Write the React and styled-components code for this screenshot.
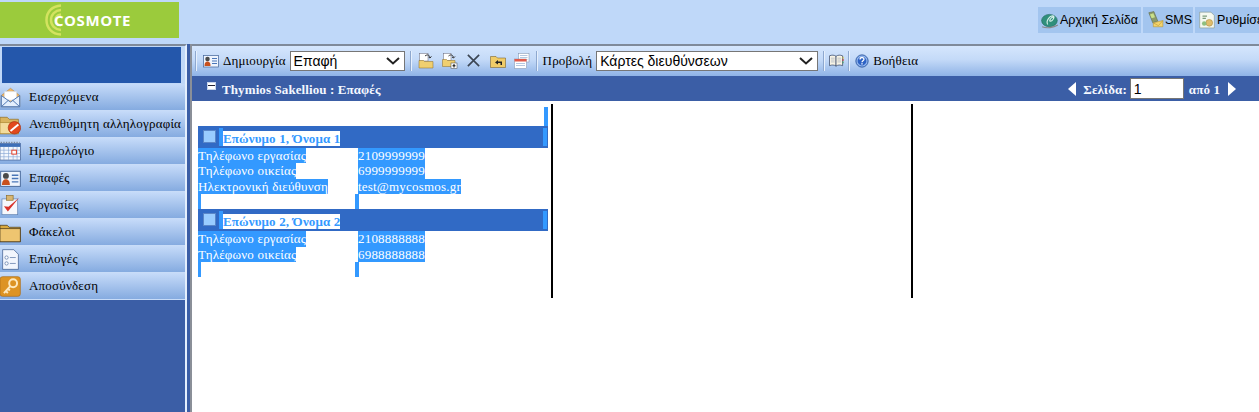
import React from 'react'
import styled, { createGlobalStyle } from 'styled-components'

const GlobalStyle = createGlobalStyle`
  html, body {
    margin: 0;
    height: 100%;
    overflow: hidden;
    background: #fff;
  }
  #root {
    height: 100%;
  }
`

/* icons */
const Sized = ({ s = 16, children }) => (
  <svg width={s} height={s} viewBox="0 0 32 32" style={{ flexShrink: 0, display: 'block' }}>
    {children}
  </svg>
)

const MailIcon = (p) => (
  <Sized {...p}>
    <path d="M2 13 16 2l14 11v17H2z" fill="#f2b866" stroke="#b58a50" />
    <path d="M7 7h18v13H7z" fill="#fff" stroke="#dbe4f0" />
    <path d="M2 13l14 10 14-10v17H2z" fill="#e4effd" stroke="#4f78b4" strokeWidth="1.500" />
    <path d="M2 30l11-10M30 30 19 20" stroke="#4f78b4" strokeWidth="1.500" fill="none" />
  </Sized>
)
const JunkIcon = (p) => (
  <Sized {...p}>
    <path d="M0 5h11l3 3h14v22H0z" fill="#d9b45e" stroke="#8c6a22" />
    <path d="M0 13h28v17H0z" fill="#f3dc9c" stroke="#a8842c" />
    <circle cx="22" cy="21" r="9.500" fill="#e2491c" stroke="#a83010" />
    <path d="M16 26 28 16" stroke="#fff" strokeWidth="3" />
  </Sized>
)
const CalendarIcon = (p) => (
  <Sized {...p}>
    <rect x="0" y="4" width="31" height="25" fill="#f4f8fe" stroke="#3a5a90" />
    <rect x="0" y="4" width="31" height="5" fill="#3e6fb8" />
    <path d="M0 14h31M0 19h31M0 24h31M6 9v20M13 9v20M20 9v20M26 9v20" stroke="#8aa8d4" />
    <rect x="18" y="14" width="7" height="6" fill="#fff" stroke="#e0402a" strokeWidth="1.500" />
    <path d="M1 2h29" stroke="#444" strokeDasharray="2 2" />
  </Sized>
)
const ContactIcon = (p) => (
  <Sized {...p}>
    <rect x="1" y="5" width="30" height="23" fill="#eef4fd" stroke="#4a6a9c" strokeWidth="1.500" />
    <circle cx="9" cy="12" r="4.500" fill="#4a4a4a" />
    <path d="M3 26c0-7 3-9 6-9s6 2 6 9z" fill="#c8501e" />
    <path d="M18 11h10M18 16h10M18 21h10" stroke="#4a76b8" strokeWidth="2" />
  </Sized>
)
const TaskIcon = (p) => (
  <Sized {...p}>
    <rect x="3" y="6" width="24" height="24" fill="#f6f8fc" stroke="#5b7cad" />
    <rect x="10" y="1" width="10" height="7" fill="#d8b673" stroke="#8c6a22" />
    <path d="M6 17l6 8L29 4 13 18z" fill="#d8322a" />
  </Sized>
)
const FolderIcon = (p) => (
  <Sized {...p}>
    <path d="M0 5h11l3 3h17v22H0z" fill="#d9a93f" stroke="#3a2a10" />
    <path d="M0 10h31v20H0z" fill="#eec570" stroke="#3a2a10" />
  </Sized>
)
const OptionsIcon = (p) => (
  <Sized {...p}>
    <path d="M4 1h17l7 7v23H4z" fill="#f2f6fd" stroke="#2f4f84" />
    <circle cx="10" cy="13" r="2.500" fill="#fff" stroke="#4a6a9c" />
    <circle cx="10" cy="22" r="2.500" fill="#fff" stroke="#4a6a9c" />
    <path d="M15 13h9M15 22h9" stroke="#4a6a9c" />
  </Sized>
)
const KeyIcon = (p) => (
  <Sized {...p}>
    <rect x="0" y="1" width="31" height="30" rx="4" fill="#dd9323" stroke="#a96a14" />
    <circle cx="20" cy="11" r="6" fill="none" stroke="#fde9c0" strokeWidth="3" />
    <path d="M16 15 6 26M9 23l3 3M12 19l3 3" stroke="#fde9c0" strokeWidth="3" fill="none" />
  </Sized>
)
const MoveIcon = (p) => (
  <Sized {...p}>
    <rect x="3" y="1" width="17" height="15" fill="#fff" stroke="#667" />
    <path d="M14 6c5-4 9-2 10 3M24 10l-3-2M24 10l3-3" stroke="#333" strokeWidth="2" fill="none" />
    <path d="M2 15h9l2 2h17v13H2z" fill="#f0cf70" stroke="#8c6a22" />
  </Sized>
)
const CopyIcon = (p) => (
  <Sized {...p}>
    <rect x="3" y="1" width="15" height="14" fill="#fff" stroke="#667" />
    <path d="M13 6c5-4 9-2 10 3M23 10l-3-2M23 10l3-3" stroke="#333" strokeWidth="2" fill="none" />
    <path d="M1 13h8l2 2h15v12H1z" fill="#f0cf70" stroke="#8c6a22" />
    <rect x="18" y="20" width="12" height="11" fill="#fff" stroke="#444" />
    <path d="M24 22v7M21 25.500h6" stroke="#111" strokeWidth="2" />
  </Sized>
)
const DeleteIcon = (p) => (
  <Sized {...p}>
    <path d="M4 4l24 24M28 4 4 28" stroke="#3c4654" strokeWidth="3.500" />
  </Sized>
)
const FolderUpIcon = (p) => (
  <Sized {...p}>
    <path d="M1 7h11l3 3h16v19H1z" fill="#f0cc68" stroke="#6c5014" />
    <path d="M10 19l6-5v3h8v7h-3v-4h-5v3z" fill="#222" />
  </Sized>
)
const ListIcon = (p) => (
  <Sized {...p}>
    <rect x="9" y="1" width="21" height="17" fill="#fff" stroke="#7a8ca8" />
    <path d="M12 5h15M12 9h15M12 13h15" stroke="#6d8fc0" />
    <rect x="1" y="12" width="24" height="19" fill="#fff" stroke="#7a8ca8" />
    <rect x="1" y="12" width="24" height="5" fill="#e25a4a" />
    <path d="M4 21h18M4 25h18" stroke="#6d8fc0" />
  </Sized>
)
const BookIcon = (p) => (
  <Sized {...p}>
    <path d="M1 6c5-2 10-2 14 1v21c-4-3-9-3-14-1z" fill="#f8f4e6" stroke="#2c3e62" strokeWidth="1.500" />
    <path d="M29 6c-5-2-10-2-14 1v21c4-3 9-3 14-1z" fill="#f8f4e6" stroke="#2c3e62" strokeWidth="1.500" />
    <path d="M4 11h8M4 15h8M4 19h8M18 11h8M18 15h8M18 19h8" stroke="#7a8ca8" />
    <path d="M29 8h2v4h-2z" fill="#e2c22a" />
    <path d="M29 13h2v4h-2z" fill="#d8322a" />
    <path d="M29 18h2v4h-2z" fill="#3aa04a" />
  </Sized>
)
const HelpIcon = (p) => (
  <Sized {...p}>
    <circle cx="16" cy="16" r="14" fill="#8fb4ee" stroke="#23509c" strokeWidth="2" />
    <circle cx="16" cy="16" r="10" fill="#2d62c4" />
    <path d="M11.500 12.500c0-6 9-6 9-.5 0 3.500-4.500 3.500-4.500 7" stroke="#fff" strokeWidth="3" fill="none" />
    <rect x="14.500" y="21" width="3" height="3" fill="#fff" />
  </Sized>
)
const HomeIcon = (p) => (
  <Sized {...p}>
    <ellipse cx="15" cy="17" rx="14" ry="11" fill="#2f8f7c" stroke="#1c6458" />
    <path d="M12 24c-4-6 4-17 10-15 3 2-2 10-6 9-2-1 3-8 6-7" stroke="#d5efe8" strokeWidth="2" fill="none" />
    <path d="M2 28c8 3 20 2 28-3" stroke="#888" strokeWidth="2" fill="none" />
  </Sized>
)
const SmsIcon = (p) => (
  <Sized {...p}>
    <path d="M5 3l9-2 7 17-9 3z" fill="#8a9a6a" stroke="#5e6a48" />
    <path d="M7 6l6-2 3 7-6 2z" fill="#c9e08a" />
    <path d="M13 21l17-4v11H13z" fill="#f3d36c" stroke="#b89430" />
    <path d="M13 21l9 5 8-9" stroke="#b89430" fill="none" />
  </Sized>
)
const SettingsIcon = (p) => (
  <Sized {...p}>
    <path d="M3 2h20l6 6v22H3z" fill="#f4f8f0" stroke="#7f8f80" />
    <path d="M8 9h8M8 13h6" stroke="#7a9a7a" strokeWidth="2" />
    <circle cx="20" cy="21" r="6" fill="#e0bd6c" stroke="#a88a3c" />
    <circle cx="11" cy="22" r="4" fill="#8fbf7f" />
  </Sized>
)
const Logo = () => (
  <svg width="18" height="32" viewBox="0 0 18 32" style={{ display: 'block', flexShrink: 0 }}>
    <g fill="none" stroke="#d3e35f" strokeWidth="2.500">
      <path d="M16 1.500C7 2 1.500 8 1.500 16S7 30 16 30.500" />
      <path d="M16 6C10 6.500 6 10.500 6 16s4 9.500 10 10" />
      <path d="M16 10.500C12.500 11 10.500 13 10.500 16s2 5 5.500 5.500" />
    </g>
  </svg>
)

const Page = styled.div`
  display: flex;
  flex-direction: column;
  height: 100%;
  width: 1259px;
  overflow: hidden;
  background: #fff;
`
const Header = styled.header`
  display: flex;
  justify-content: space-between;
  align-items: flex-start;
  height: 44px;
  flex-shrink: 0;
  background: #bfd8f9;
`
const LogoBox = styled.div`
  display: flex;
  align-items: center;
  justify-content: center;
  width: 179px;
  height: 36px;
  margin-top: 2px;
  padding-right: 3px;
  box-sizing: border-box;
  background: #9bcb3c;
`
const LogoText = styled.span`
  margin-left: -9px;
  font: bold 15px "Open Sans", sans-serif;
  letter-spacing: 0.6px;
  color: #fff;
`
const HeaderLinks = styled.nav`
  display: flex;
  gap: 2px;
  width: 221px;
  margin-top: 7px;
  flex-shrink: 0;
  overflow: hidden;
`
const HeaderLink = styled.a`
  display: flex;
  align-items: center;
  gap: 1px;
  height: 26px;
  padding: 0 ${(p) => (p.$tight ? '1px' : '3px')} 0 3px;
  flex-shrink: 0;
  background: #a3c5ef;
  font: 12.500px "Liberation Sans", sans-serif;
  color: #000;
`
const Body = styled.div`
  display: flex;
  flex: 1;
  min-height: 0;
`
const Sidebar = styled.aside`
  display: flex;
  flex-direction: column;
  width: 187px;
  flex-shrink: 0;
  box-sizing: border-box;
  border-top: 2px solid #7f8a9a;
  border-right: 2px solid #e4effd;
  background: #3b5ea6;
`
const SideTopWrap = styled.div`
  padding: 1px 4px 1px 2px;
  background: #c0d8f8;
`
const SideTop = styled.div`
  height: 36px;
  background: #2457ab;
`
const NavItem = styled.a`
  display: flex;
  align-items: center;
  height: 26px;
  border-bottom: 1px solid #c8dcf8;
  background: linear-gradient(#c6dbf9, #85abe0);
  font: 13px "Liberation Serif", serif;
  letter-spacing: 0.2px;
  color: #000;
  white-space: nowrap;
`
const NavIconBox = styled.span`
  display: flex;
  width: 29px;
  flex-shrink: 0;
`
const Splitter = styled.div`
  width: 5px;
  flex-shrink: 0;
  box-sizing: border-box;
  background: #3b5ea6;
  border-right: 2px solid #8a8f98;
`
const Main = styled.main`
  display: flex;
  flex-direction: column;
  flex: 1;
  min-width: 0;
  border-top: 2px solid #7f8a9a;
`
const Toolbar = styled.div`
  display: flex;
  align-items: center;
  gap: 4px;
  height: 30px;
  flex-shrink: 0;
  padding: 0 0 1px 2px;
  box-sizing: border-box;
  background: linear-gradient(#d5e6fd, #c4daf8 45%, #8fb3e6);
  font: 13px "Liberation Serif", serif;
  letter-spacing: 0.15px;
  color: #000;
`
const Sep = styled.span`
  width: 1px;
  height: 20px;
  margin: 0 1px;
  background: #8ea8cf;
  border-right: 1px solid #e6f0fd;
`
const ToolGroup = styled.span`
  display: flex;
  align-items: center;
  gap: 4px;
  margin: 0 -1px;
`
const ToolButton = styled.span`
  display: flex;
  align-items: center;
  justify-content: center;
  width: ${(p) => p.$w || 20}px;
`
const FakeSelect = styled.div`
  display: flex;
  align-items: center;
  justify-content: space-between;
  width: ${(p) => p.$w}px;
  height: 20px;
  padding: 0 4px 0 3px;
  box-sizing: border-box;
  background: #fff;
  border: 1px solid #767676;
  font: 14px "Liberation Sans", sans-serif;
  letter-spacing: 0;
`
const TitleBar = styled.div`
  display: flex;
  align-items: center;
  height: 25px;
  flex-shrink: 0;
  box-sizing: border-box;
  padding: 2px 23px 0 15px;
  background: #3b5ea6;
  font: bold 13px "Liberation Serif", serif;
  letter-spacing: 0.1px;
  color: #f4f8ff;
`
const Collapse = styled.span`
  width: 9px;
  height: 8px;
  margin: -8px 6px 0 0;
  box-sizing: border-box;
  background: #fff;
  border: 1px solid #c5d3ea;
  display: flex;
  align-items: center;
  justify-content: center;
  &::after {
    content: '';
    width: 7px;
    height: 1px;
    background: #223;
  }
`
const TitleSpacer = styled.span`
  flex: 1;
`
const Arrow = styled.span`
  width: 0;
  height: 0;
  border-top: 7px solid transparent;
  border-bottom: 7px solid transparent;
  ${(p) => (p.$left ? 'border-right: 8px solid #fff;' : 'border-left: 8px solid #fff;')}
  margin: ${(p) => (p.$left ? '-2px 7px 0 0' : '-2px 0 0 8px')};
`
const PageInput = styled.input`
  width: 54px;
  height: 21px;
  margin: -2px 5px 0 3px;
  padding: 0 2px 0 3px;
  box-sizing: border-box;
  border: 1px solid #767676;
  font: 14px "Liberation Sans", sans-serif;
`
const Columns = styled.div`
  display: grid;
  grid-template-columns: repeat(2, 360px);
  height: 194px;
  margin-top: 3px;
  padding-left: 6px;
`
const Column = styled.div`
  width: 355px;
  padding-top: 3px;
  box-sizing: border-box;
  border-right: 2px solid #000;
`
const TopSliver = styled.div`
  display: flex;
  justify-content: flex-end;
  width: 350px;
  height: 19px;
  &::after {
    content: '';
    width: 4px;
    background: #3399ff;
  }
`
const Card = styled.section`
  width: 350px;
`
const CardHead = styled.div`
  display: flex;
  align-items: stretch;
  height: 22px;
  padding: 2px 1px 2px 5px;
  box-sizing: border-box;
  background: #316ac5;
`
const Check = styled.span`
  width: 13px;
  height: 13px;
  margin: 2px 3px 0 0;
  box-sizing: border-box;
  background: #99ccff;
  border: 1px solid #5a86c8;
`
const NameSliver = styled.span`
  width: 4px;
  background: #3399ff;
`
const Name = styled.span`
  align-self: flex-end;
  height: 15px;
  background: #fff;
  font: bold 13px/15px "Liberation Serif", serif;
  letter-spacing: 0.15px;
  color: #3399ff;
  white-space: nowrap;
`
const HeadSpacer = styled.span`
  flex: 1;
`
const Rows = styled.dl`
  display: grid;
  grid-template-columns: 157px 1fr;
  margin: 0;
  font: 13px/15px "Liberation Serif", serif;
  letter-spacing: 0.2px;
`
const Cell = styled.dd`
  margin: 0;
  height: 15.400px;
  padding-left: ${(p) => (p.$value ? '3px' : 0)};
`
const Selected = styled.span`
  display: inline-block;
  height: 100%;
  background: #3399ff;
  color: #fff;
  white-space: nowrap;
`
const Filler = styled.div`
  display: grid;
  grid-template-columns: 157px 1fr;
  height: 15px;
`
const FillerBar = styled.span`
  display: block;
  width: ${(p) => p.$w}px;
  height: 100%;
  background: #3399ff;
`

const navItems = [
  ['Εισερχόμενα', MailIcon],
  ['Ανεπιθύμητη αλληλογραφία', JunkIcon],
  ['Ημερολόγιο', CalendarIcon],
  ['Επαφές', ContactIcon],
  ['Εργασίες', TaskIcon],
  ['Φάκελοι', FolderIcon],
  ['Επιλογές', OptionsIcon],
  ['Αποσύνδεση', KeyIcon],
]

const contacts = [
  {
    name: 'Επώνυμο 1, Όνομα 1',
    rows: [
      ['Τηλέφωνο εργασίας', '2109999999'],
      ['Τηλέφωνο οικείας', '6999999999'],
      ['Ηλεκτρονική διεύθυνση', 'test@mycosmos.gr'],
    ],
  },
  {
    name: 'Επώνυμο 2, Όνομα 2',
    rows: [
      ['Τηλέφωνο εργασίας', '2108888888'],
      ['Τηλέφωνο οικείας', '6988888888'],
    ],
  },
]

const Chevron = () => (
  <svg width="14" height="8" viewBox="0 0 14 8" style={{ display: 'block' }}>
    <path d="M1 1l6 5.500L13 1" fill="none" stroke="#222" strokeWidth="2" />
  </svg>
)

const App = () => {
  return (
    <Page>
      <GlobalStyle />
      <Header>
        <LogoBox>
          <Logo />
          <LogoText>COSMOTE</LogoText>
        </LogoBox>
        <HeaderLinks>
          <HeaderLink><HomeIcon s={18} />Αρχική Σελίδα</HeaderLink>
          <HeaderLink $tight><SmsIcon s={18} />SMS</HeaderLink>
          <HeaderLink><SettingsIcon s={18} />Ρυθμίσεις</HeaderLink>
        </HeaderLinks>
      </Header>
      <Body>
        <Sidebar>
          <SideTopWrap>
            <SideTop />
          </SideTopWrap>
          {navItems.map(([label, Icon]) => (
            <NavItem key={label}>
              <NavIconBox><Icon s={21} /></NavIconBox>
              {label}
            </NavItem>
          ))}
        </Sidebar>
        <Splitter />
        <Main>
          <Toolbar>
            <Sep />
            <ToolButton $w={17}><ContactIcon s={16} /></ToolButton>
            Δημιουργία
            <FakeSelect $w={115}>Επαφή<Chevron /></FakeSelect>
            <Sep />
            <ToolGroup>
              <ToolButton><MoveIcon s={16} /></ToolButton>
              <ToolButton><CopyIcon s={16} /></ToolButton>
              <ToolButton><DeleteIcon s={15} /></ToolButton>
              <ToolButton><FolderUpIcon s={16} /></ToolButton>
              <ToolButton><ListIcon s={16} /></ToolButton>
            </ToolGroup>
            <Sep />
            Προβολή
            <FakeSelect $w={222}>Κάρτες διευθύνσεων<Chevron /></FakeSelect>
            <Sep />
            <ToolGroup>
              <ToolButton $w={15}><BookIcon s={15} /></ToolButton>
            </ToolGroup>
            <Sep />
            <HelpIcon s={14} />
            Βοήθεια
          </Toolbar>
          <TitleBar>
            <Collapse />
            Thymios Sakelliou : Επαφές
            <TitleSpacer />
            <Arrow $left />
            Σελίδα:
            <PageInput defaultValue="1" />
            από 1
            <Arrow />
          </TitleBar>
          <Columns>
            <Column>
              <TopSliver />
              {contacts.map((c) => (
                <Card key={c.name}>
                  <CardHead>
                    <Check />
                    <NameSliver />
                    <Name>{c.name}</Name>
                    <HeadSpacer />
                    <NameSliver />
                  </CardHead>
                  <Rows>
                    {c.rows.map(([k, v]) => (
                      <React.Fragment key={k}>
                        <Cell><Selected>{k}</Selected></Cell>
                        <Cell $value><Selected>{v}</Selected></Cell>
                      </React.Fragment>
                    ))}
                  </Rows>
                  <Filler>
                    <FillerBar $w={3} />
                    <FillerBar $w={4} />
                  </Filler>
                </Card>
              ))}
            </Column>
            <Column />
          </Columns>
        </Main>
      </Body>
    </Page>
  )
}

export default App
